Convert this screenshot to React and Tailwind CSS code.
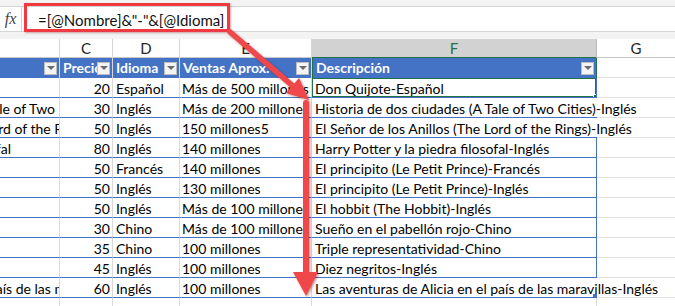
import React from "react";

const rows = [
  { b: "", bm: "", c: 20, d: "Español", e: "Más de 500 millones", f: "Don Quijote-Español", sel: true },
  { b: "Historia de dos ciudades (A Tale of Two", bm: "mr-[4px]", c: 30, d: "Inglés", e: "Más de 200 millones", f: "Historia de dos ciudades (A Tale of Two Cities)-Inglés", spill: true },
  { b: "El Señor de los Anillos (The Lord of the R", bm: "-mr-[4px]", c: 50, d: "Inglés", e: "150 millones5", f: "El Señor de los Anillos (The Lord of the Rings)-Inglés", spill: true },
  { b: "Harry Potter y la piedra filosofal", bm: "mr-[48px]", c: 80, d: "Inglés", e: "140 millones", f: "Harry Potter y la piedra filosofal-Inglés" },
  { b: "", bm: "", c: 50, d: "Francés", e: "140 millones", f: "El principito (Le Petit Prince)-Francés" },
  { b: "", bm: "", c: 50, d: "Inglés", e: "130 millones", f: "El principito (Le Petit Prince)-Inglés" },
  { b: "", bm: "", c: 50, d: "Inglés", e: "Más de 100 millones", f: "El hobbit (The Hobbit)-Inglés" },
  { b: "", bm: "", c: 30, d: "Chino", e: "Más de 100 millones", f: "Sueño en el pabellón rojo-Chino" },
  { b: "", bm: "", c: 35, d: "Chino", e: "100 millones", f: "Triple representatividad-Chino" },
  { b: "", bm: "", c: 45, d: "Inglés", e: "100 millones", f: "Diez negritos-Inglés" },
  { b: "Las aventuras de Alicia en el país de las m", bm: "-mr-[7px]", c: 60, d: "Inglés", e: "100 millones", f: "Las aventuras de Alicia en el país de las maravillas-Inglés", spill: true, last: true },
];

const grid = "grid grid-cols-[60px_53px_67px_132px_285px_78px]";
const cell = "h-[20px] border-b border-r border-b-[#4472c4] border-r-[#d9d9d9] overflow-hidden whitespace-nowrap pt-[2px] leading-[17px]";

function FilterButton() {
  return (
    <span className="mr-[2px] flex h-[13px] w-[13px] shrink-0 items-center justify-center border border-[#bdbdbd] bg-[#f4f4f4]">
      <span className="h-0 w-0 border-x-[4px] border-t-[4px] border-x-transparent border-t-[#6b6b6b]" />
    </span>
  );
}

function HeadCell({ label, last }) {
  return (
    <div className={`flex h-[20px] items-center border-r ${last ? "border-r-[#217346]" : "border-r-[#d9d9d9]"} bg-[#4472c4] pl-[3px]`}>
      <span className="min-w-0 flex-1 overflow-hidden whitespace-nowrap text-[14px] font-bold leading-[20px] text-white">{label}</span>
      <FilterButton />
    </div>
  );
}

function Arrows() {
  return (
    <svg className="pointer-events-none absolute left-0 top-0" width="675" height="306" viewBox="0 0 675 306">
      <defs>
        <filter id="sh" x="-20%" y="-20%" width="140%" height="140%">
          <feDropShadow dx="1.2" dy="1.2" stdDeviation="0.9" floodColor="#6b0000" floodOpacity="0.45" />
        </filter>
      </defs>
      <g fill="#f0464b" stroke="none" filter="url(#sh)">
        <line x1="230" y1="32" x2="294" y2="87" stroke="#f0464b" strokeWidth="5.5" strokeLinecap="round" />
        <polygon points="309,100 286,93 299,78" />
        <line x1="306" y1="103" x2="306" y2="276" stroke="#f0464b" strokeWidth="6" strokeLinecap="round" />
        <polygon points="293,272 318,272 306,296" />
      </g>
    </svg>
  );
}

export default function App() {
  return (
    <div className="relative h-[306px] w-[675px] overflow-hidden bg-white font-['Lato',sans-serif] text-[14px] text-black">
      <div className="h-[7px] border-b border-[#d4d4d4] bg-[#f3f3f3]" />
      <div className="flex h-[25px] border-b border-[#d4d4d4] bg-white">
        <div className="flex w-[22px] items-center justify-center border-r border-[#d4d4d4] bg-white font-['Liberation_Serif',serif] text-[16px] italic text-[#444]">
          fx
        </div>
        <div className="flex-1 pl-[16px] pt-[3px] text-[15px] leading-[20px] text-[#111]">=[@Nombre]&amp;"-"&amp;[@Idioma]</div>
      </div>
      <div className="h-[7px] bg-[#f3f3f3]" />

      <div className={`${grid} h-[19px] border-b border-[#c8c8c8] text-[15px] leading-[18px] text-[#262626]`}>
        <div className="border-r border-[#d4d4d4]" />
        <div className="border-r border-[#d4d4d4] text-center">C</div>
        <div className="border-r border-[#d4d4d4] text-center">D</div>
        <div className="border-r border-[#d4d4d4] text-center">E</div>
        <div className="border-b-2 border-r border-b-[#217346] border-r-[#bdbdbd] bg-[#d2d2d2] text-center text-[#217346]">F</div>
        <div className="text-center">G</div>
      </div>

      <div className={grid}>
        <HeadCell label="" />
        <HeadCell label="Precio" />
        <HeadCell label="Idioma" />
        <HeadCell label="Ventas Aprox." />
        <div className="border-l border-[#217346]">
          <HeadCell label="Descripción" last />
        </div>
        <div className="h-[20px] border-b border-[#e1e1e1]" />
      </div>

      {rows.map((r, i) => (
        <div key={i} className={grid}>
          <div className={`${cell} flex justify-end`}>
            <span className={`shrink-0 ${r.bm}`}>{r.b}</span>
          </div>
          <div className={`${cell} pr-[2px] text-right`}>{r.c}</div>
          <div className={`${cell} pl-[3px]`}>{r.d}</div>
          <div className={`${cell} pl-[2px]`}>{r.e}</div>
          <div
            className={`relative h-[20px] whitespace-nowrap border-b border-b-[#4472c4] pl-[3px] pt-[2px] leading-[17px] ${
              r.spill ? "z-10 overflow-visible" : "overflow-hidden border-r border-r-[#4472c4]"
            }`}
          >
            {r.f}
            {r.sel && (
              <>
                <span className="absolute -bottom-[1px] -left-[1px] -right-[1px] top-[-1px] border-2 border-[#217346]" />
                <span className="absolute -bottom-[3px] -right-[3px] h-[6px] w-[6px] border border-white bg-[#217346]" />
              </>
            )}
            {r.last && <span className="absolute -bottom-[1px] right-0 h-[4px] w-[4px] bg-[#4472c4]" />}
          </div>
          <div className="h-[20px] border-b border-[#e1e1e1]" />
        </div>
      ))}

      <div className={`${grid} h-[20px]`}>
        <div className="border-r border-[#d9d9d9]" />
        <div className="border-r border-[#d9d9d9]" />
        <div className="border-r border-[#d9d9d9]" />
        <div className="border-r border-[#d9d9d9]" />
        <div className="border-r border-[#d9d9d9]" />
        <div />
      </div>

      <div className="absolute left-[24px] top-[3px] h-[29px] w-[206px] border-[3px] border-[#ee3a40] shadow-[1px_1px_2px_rgba(120,0,0,0.35)]" />
      <Arrows />
    </div>
  );
}
